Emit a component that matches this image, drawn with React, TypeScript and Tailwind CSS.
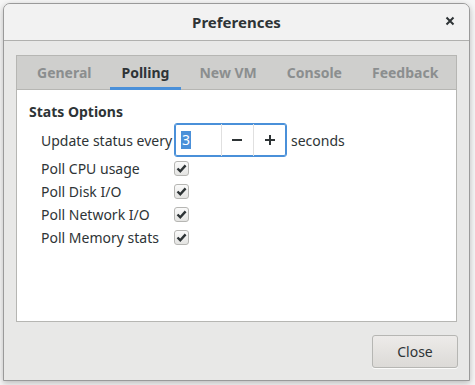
import { useState } from "react";

const TABS = ["General", "Polling", "New VM", "Console", "Feedback"];
const POLL_ROWS = ["Poll CPU usage", "Poll Disk I/O", "Poll Network I/O", "Poll Memory stats"];

function CheckBox({ checked, onToggle }: { checked: boolean; onToggle: () => void }) {
  return (
    <button
      onClick={onToggle}
      className="w-[15px] h-[15px] rounded-[3px] border border-[#b6b6b3] bg-gradient-to-b from-[#fafafa] to-[#e4e4e2] flex items-center justify-center"
    >
      {checked && (
        <svg width="11" height="11" viewBox="0 0 11 11">
          <path d="M1.5 5.5 L4.3 8.3 L9.6 2.4" fill="none" stroke="#2e3436" strokeWidth="2.4" />
        </svg>
      )}
    </button>
  );
}

export default function App() {
  const [active, setActive] = useState("Polling");
  const [value, setValue] = useState(3);
  const [checks, setChecks] = useState([true, true, true, true]);

  return (
    <div
      className="w-[475px] h-[385px] bg-[#f6f6f6] pt-[3px] px-[3px] text-[#2e3436]"
      style={{ fontFamily: '"Noto Sans", "DejaVu Sans", sans-serif' }}
    >
      <div className="w-[467px] h-[378px] border border-[#9a9a9a] rounded-t-[7px] bg-[#e8e8e7] shadow-[0_2px_6px_rgba(0,0,0,0.25)] flex flex-col overflow-hidden">
        {/* header bar */}
        <div className="h-[37px] shrink-0 bg-[#f2f2f2] border-b border-[#b0b0ae] flex items-center relative">
          <div className="flex-1 text-center text-[15px] font-bold leading-none">Preferences</div>
          <div className="absolute right-[13px] top-[11px]">
            <svg width="12" height="12" viewBox="0 0 12 12">
              <path d="M2.5 2.5 L9.5 9.5 M9.5 2.5 L2.5 9.5" stroke="#2e3436" strokeWidth="2" />
            </svg>
          </div>
        </div>

        {/* notebook */}
        <div className="mt-[14px] mx-[12px] h-[267px] border border-[#b6b6b3] flex flex-col">
          <div className="h-[34px] shrink-0 bg-[#cfcfcd] border-b border-[#b6b6b3] flex pl-[8px]">
            {TABS.map((t) => (
              <button
                key={t}
                onClick={() => setActive(t)}
                className={`shrink-0 whitespace-nowrap px-[12px] mr-[6px] h-full text-[14px] font-bold relative ${
                  active === t ? "text-[#2e3436]" : "text-[#8b8e8f]"
                }`}
              >
                {t}
                {active === t && <span className="absolute left-0 right-0 bottom-[-1px] h-[3px] bg-[#4a90d9]" />}
              </button>
            ))}
          </div>
          <div className="flex-1 bg-white pl-[12px] pt-[12px]">
            <div className="text-[14px] font-bold leading-[20px]">Stats Options</div>
            <div className="pl-[12px] mt-[1px] text-[14px]">
              <div className="flex items-center h-[34px]">
                <span className="w-[133px]">Update status every</span>
                <div className="flex h-[34px] w-[113px] border border-[#4a90d9] rounded-[3px] shadow-[inset_0_0_0_1px_#4a90d9]">
                  <div className="w-[46px] flex items-center pl-[6px]">
                    <span className="bg-[#4a90d9] text-white leading-[18px] px-[1px]">{value}</span>
                  </div>
                  <button
                    onClick={() => setValue(Math.max(1, value - 1))}
                    className="w-[33px] border-l border-[#e0e0e0] flex items-center justify-center"
                  >
                    <svg width="12" height="12" viewBox="0 0 12 12">
                      <path d="M1 6 H11" stroke="#2e3436" strokeWidth="2" />
                    </svg>
                  </button>
                  <button
                    onClick={() => setValue(value + 1)}
                    className="w-[33px] border-l border-[#e0e0e0] flex items-center justify-center"
                  >
                    <svg width="12" height="12" viewBox="0 0 12 12">
                      <path d="M1 6 H11 M6 1 V11" stroke="#2e3436" strokeWidth="2" />
                    </svg>
                  </button>
                </div>
                <span className="ml-[4px]">seconds</span>
              </div>
              <div>
                {POLL_ROWS.map((label, i) => (
                  <div key={label} className="flex items-center h-[23px]">
                    <span className="w-[133px]">{label}</span>
                    <CheckBox
                      checked={checks[i]}
                      onToggle={() => setChecks(checks.map((c, j) => (j === i ? !c : c)))}
                    />
                  </div>
                ))}
              </div>
            </div>
          </div>
        </div>

        {/* action area */}
        <div className="flex justify-end pr-[11px] pt-[13px]">
          <button className="w-[86px] h-[33px] rounded-[3px] border border-[#b6b6b3] bg-gradient-to-b from-[#edebe9] to-[#dcdad7] text-[14px] shadow-[0_1px_0_rgba(255,255,255,0.8)]">
            Close
          </button>
        </div>
      </div>
    </div>
  );
}
